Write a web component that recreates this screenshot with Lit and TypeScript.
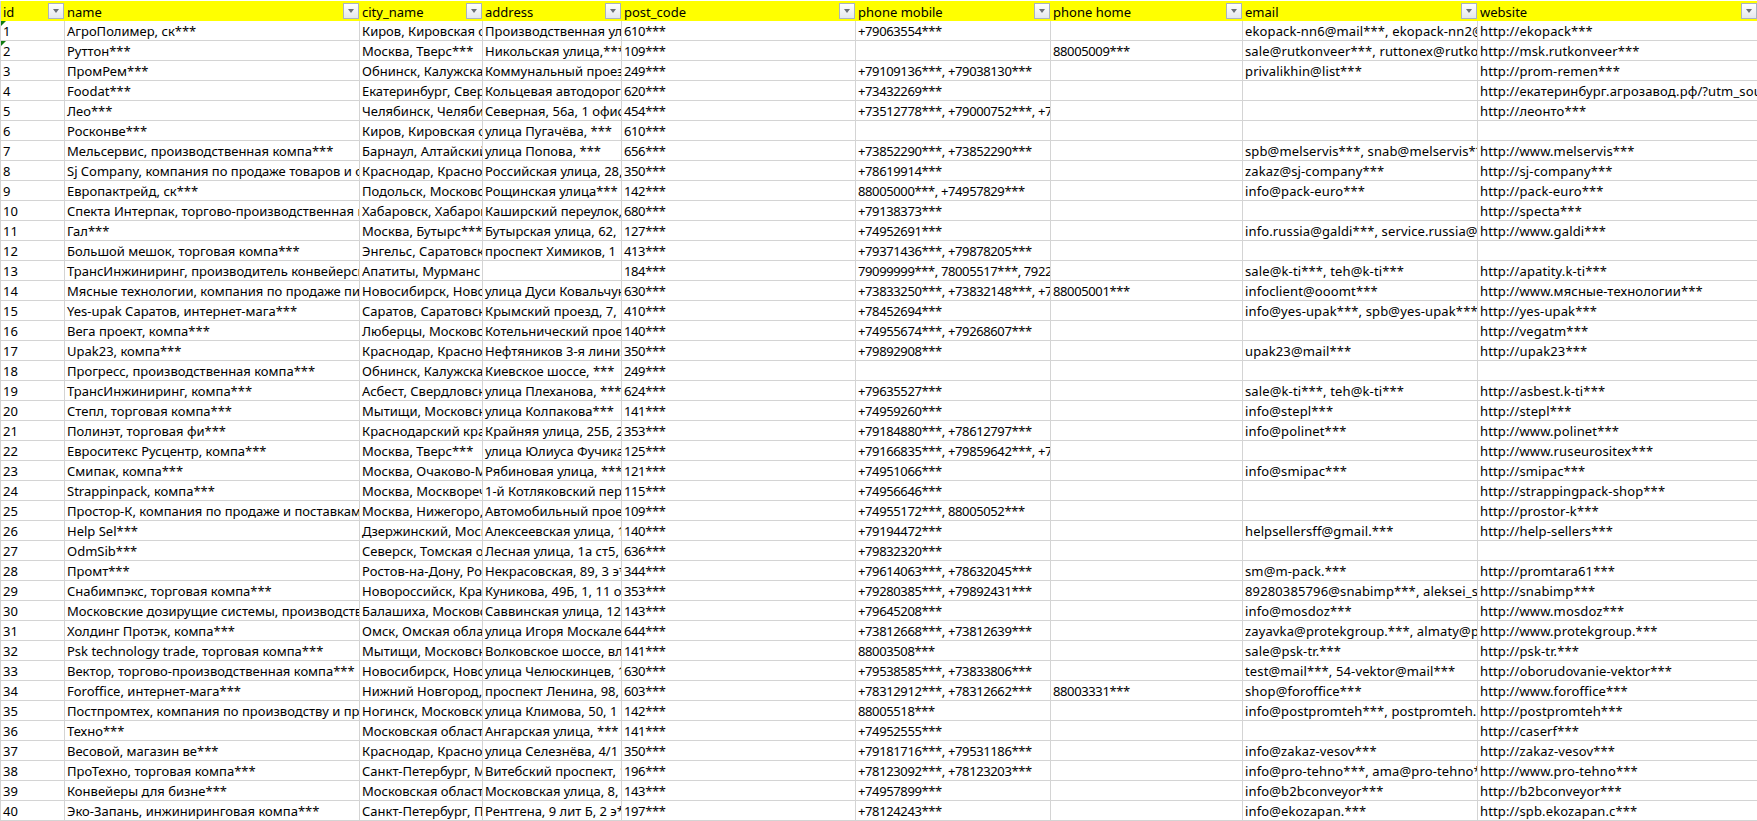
import { LitElement, html, css } from "lit";
import { customElement } from "lit/decorators.js";

const COLUMNS = ["id", "name", "city_name", "address", "post_code", "phone mobile", "phone home", "email", "website"];

const ROWS: string[][] = [
  ["1", "АгроПолимер, ск***", "Киров, Кировская область", "Производственная улица, 7", "610***", "+79063554***", "", "ekopack-nn6@mail***, ekopack-nn2@mail***", "http://ekopack***"],
  ["2", "Руттон***", "Москва, Тверс***", "Никольская улица,*** 4", "109***", "", "88005009***", "sale@rutkonveer***, ruttonex@rutkonveer***", "http://msk.rutkonveer***"],
  ["3", "ПромРем***", "Обнинск, Калужская область", "Коммунальный проезд, 5", "249***", "+79109136***, +79038130***", "", "privalikhin@list***", "http://prom-remen***"],
  ["4", "Foodat***", "Екатеринбург, Свердловская", "Кольцевая автодорога, 2", "620***", "+73432269***", "", "", "http://екатеринбург.агрозавод.рф/?utm_source=2gis"],
  ["5", "Лео***", "Челябинск, Челябинская", "Северная, 56а, 1 офис 2", "454***", "+73512778***, +79000752***, +79000752***", "", "", "http://леонто***"],
  ["6", "Росконве***", "Киров, Кировская область", "улица Пугачёва, ***", "610***", "", "", "", ""],
  ["7", "Мельсервис, производственная компа***", "Барнаул, Алтайский край", "улица Попова, ***", "656***", "+73852290***, +73852290***", "", "spb@melservis***, snab@melservis***", "http://www.melservis***"],
  ["8", "Sj Company, компания по продаже товаров и оборудования", "Краснодар, Краснодарский", "Российская улица, 28, 1", "350***", "+78619914***", "", "zakaz@sj-company***", "http://sj-company***"],
  ["9", "Европактрейд, ск***", "Подольск, Московская", "Рощинская улица***", "142***", "88005000***, +74957829***", "", "info@pack-euro***", "http://pack-euro***"],
  ["10", "Спекта Интерпак, торгово-производственная компания", "Хабаровск, Хабаровский", "Каширский переулок, 3", "680***", "+79138373***", "", "", "http://specta***"],
  ["11", "Гал***", "Москва, Бутырс***", "Бутырская улица, 62, 1", "127***", "+74952691***", "", "info.russia@galdi***, service.russia@galdi***", "http://www.galdi***"],
  ["12", "Большой мешок, торговая компа***", "Энгельс, Саратовская", "проспект Химиков, 1", "413***", "+79371436***, +79878205***", "", "", ""],
  ["13", "ТрансИнжиниринг, производитель конвейерских лент", "Апатиты, Мурманс", "", "184***", "79099999***, 78005517***, 79221234***", "", "sale@k-ti***, teh@k-ti***", "http://apatity.k-ti***"],
  ["14", "Мясные технологии, компания по продаже пищевого", "Новосибирск, Новосибирская", "улица Дуси Ковальчук, 1", "630***", "+73833250***, +73832148***, +73832148***", "88005001***", "infoclient@ooomt***", "http://www.мясные-технологии***"],
  ["15", "Yes-upak Саратов, интернет-мага***", "Саратов, Саратовская", "Крымский проезд, 7, 1", "410***", "+78452694***", "", "info@yes-upak***, spb@yes-upak***", "http://yes-upak***"],
  ["16", "Вега проект, компа***", "Люберцы, Московская", "Котельнический проезд, 1", "140***", "+74955674***, +79268607***", "", "", "http://vegatm***"],
  ["17", "Upak23, компа***", "Краснодар, Краснодарский", "Нефтяников 3-я линия, 1", "350***", "+79892908***", "", "upak23@mail***", "http://upak23***"],
  ["18", "Прогресс, производственная компа***", "Обнинск, Калужская область", "Киевское шоссе, ***", "249***", "", "", "", ""],
  ["19", "ТрансИнжиниринг, компа***", "Асбест, Свердловская", "улица Плеханова, ***", "624***", "+79635527***", "", "sale@k-ti***, teh@k-ti***", "http://asbest.k-ti***"],
  ["20", "Степл, торговая компа***", "Мытищи, Московская", "улица Колпакова***", "141***", "+74959260***", "", "info@stepl***", "http://stepl***"],
  ["21", "Полинэт, торговая фи***", "Краснодарский край", "Крайняя улица, 25Б, 2", "353***", "+79184880***, +78612797***", "", "info@polinet***", "http://www.polinet***"],
  ["22", "Евроситекс Русцентр, компа***", "Москва, Тверс***", "улица Юлиуса Фучика", "125***", "+79166835***, +79859642***, +79859642***", "", "", "http://www.ruseurositex***"],
  ["23", "Смипак, компа***", "Москва, Очаково-Матвеевское", "Рябиновая улица, ***", "121***", "+74951066***", "", "info@smipac***", "http://smipac***"],
  ["24", "Strappinpack, компа***", "Москва, Москворечье", "1-й Котляковский переулок", "115***", "+74956646***", "", "", "http://strappingpack-shop***"],
  ["25", "Простор-К, компания по продаже и поставкам упаковки", "Москва, Нижегоро, ***", "Автомобильный проезд, 4", "109***", "+74955172***, 88005052***", "", "", "http://prostor-k***"],
  ["26", "Help Sel***", "Дзержинский, Московская", "Алексеевская улица, 1", "140***", "+79194472***", "", "helpsellersff@gmail.***", "http://help-sellers***"],
  ["27", "OdmSib***", "Северск, Томская область", "Лесная улица, 1а ст5, 2", "636***", "+79832320***", "", "", ""],
  ["28", "Промт***", "Ростов-на-Дону, Ростовская", "Некрасовская, 89, 3 э***", "344***", "+79614063***, +78632045***", "", "sm@m-pack.***", "http://promtara61***"],
  ["29", "Снабимпэкс, торговая компа***", "Новороссийск, Краснодарский", "Куникова, 49Б, 1, 11 офис", "353***", "+79280385***, +79892431***", "", "89280385796@snabimp***, aleksei_sokolov@mail***", "http://snabimp***"],
  ["30", "Московские дозирущие системы, производственная", "Балашиха, Московская", "Саввинская улица, 12", "143***", "+79645208***", "", "info@mosdoz***", "http://www.mosdoz***"],
  ["31", "Холдинг Протэк, компа***", "Омск, Омская область", "улица Игоря Москаленко", "644***", "+73812668***, +73812639***", "", "zayavka@protekgroup.***, almaty@protekgroup.***", "http://www.protekgroup.***"],
  ["32", "Psk technology trade, торговая компа***", "Мытищи, Московская", "Волковское шоссе, вл", "141***", "88003508***", "", "sale@psk-tr.***", "http://psk-tr.***"],
  ["33", "Вектор, торгово-производственная компа***", "Новосибирск, Новосибирская", "улица Челюскинцев, 1", "630***", "+79538585***, +73833806***", "", "test@mail***, 54-vektor@mail***", "http://oborudovanie-vektor***"],
  ["34", "Foroffice, интернет-мага***", "Нижний Новгород, Нижегородская", "проспект Ленина, 98, 1", "603***", "+78312912***, +78312662***", "88003331***", "shop@foroffice***", "http://www.foroffice***"],
  ["35", "Постпромтех, компания по производству и продаже", "Ногинск, Московская", "улица Климова, 50, 1 1", "142***", "88005518***", "", "info@postpromteh***, postpromteh.info@mail***", "http://postpromteh***"],
  ["36", "Техно***", "Московская область", "Ангарская улица, ***", "141***", "+74952555***", "", "", "http://caserf***"],
  ["37", "Весовой, магазин ве***", "Краснодар, Краснодарский", "улица Селезнёва, 4/1", "350***", "+79181716***, +79531186***", "", "info@zakaz-vesov***", "http://zakaz-vesov***"],
  ["38", "ПроТехно, торговая компа***", "Санкт-Петербург, Московский", "Витебский проспект, 1", "196***", "+78123092***, +78123203***", "", "info@pro-tehno***, ama@pro-tehno***", "http://www.pro-tehno***"],
  ["39", "Конвейеры для бизне***", "Московская область", "Московская улица, 8, 1", "143***", "+74957899***", "", "info@b2bconveyor***", "http://b2bconveyor***"],
  ["40", "Эко-Запань, инжиниринговая компа***", "Санкт-Петербург, Петроградский", "Рентгена, 9 лит Б, 2 э***", "197***", "+78124243***", "", "info@ekozapan.***", "http://spb.ekozapan.c***"],
];

@customElement("app-root")
export class AppRoot extends LitElement {
  static styles = css`
    :host {
      display: block;
      width: 1757px;
      height: 821px;
      overflow: hidden;
      background: #fff;
      padding: 1px 0 0 1px;
      box-sizing: border-box;
      font-family: "Noto Sans", "Liberation Sans", sans-serif;
      font-size: 13px;
      color: #000;
    }
    .sheet {
      display: grid;
      grid-template-columns: 64px 295px 123px 139px 234px 195px 192px 235px 280px;
      grid-auto-rows: 20px;
      box-shadow: -1px 0 0 #d4d4d4;
    }
    .head {
      display: flex;
      align-items: center;
      justify-content: space-between;
      background: #ffff00;
      padding: 0 1px 0 2px;
      box-sizing: border-box;
      min-width: 0;
    }
    .head span {
      line-height: 20px;
      padding-top: 2px;
    }
    .filter {
      flex: none;
      width: 16px;
      height: 16px;
      box-sizing: border-box;
      border: 1px solid #a9b3c0;
      background: linear-gradient(#ffffff, #e4e7ec);
      display: flex;
      align-items: center;
      justify-content: center;
    }
    .filter::after {
      content: "";
      border-left: 3.5px solid transparent;
      border-right: 3.5px solid transparent;
      border-top: 4px solid #6b6f76;
    }
    .cell {
      position: relative;
      box-sizing: border-box;
      height: 20px;
      line-height: 20px;
      padding-left: 2px;
      white-space: nowrap;
      overflow: hidden;
      border-right: 1px solid #d4d4d4;
      border-bottom: 1px solid #d4d4d4;
    }
    .cell.last {
      border-right: none;
    }
    .cell.digits {
      letter-spacing: -0.38px;
    }
    .cell.latin {
      letter-spacing: 0.13px;
    }
    .flag {
      position: absolute;
      left: 0;
      top: 0;
      width: 0;
      height: 0;
      border-top: 5px solid #107c10;
      border-right: 5px solid transparent;
    }
  `;

  private cellClass(j: number) {
    if (j === 4 || j === 5 || j === 6) return "digits";
    if (j === 7) return "latin";
    if (j === COLUMNS.length - 1) return "latin last";
    return "";
  }

  render() {
    return html`<div class="sheet">
      ${COLUMNS.map(
        (c) => html`<div class="head"><span>${c}</span><div class="filter"></div></div>`
      )}
      ${ROWS.map((r, i) =>
        r.map(
          (v, j) =>
            html`<div class="cell ${this.cellClass(j)}">${j === 0 && i < 2
              ? html`<div class="flag"></div>`
              : ""}${v}</div>`
        )
      )}
    </div>`;
  }
}
